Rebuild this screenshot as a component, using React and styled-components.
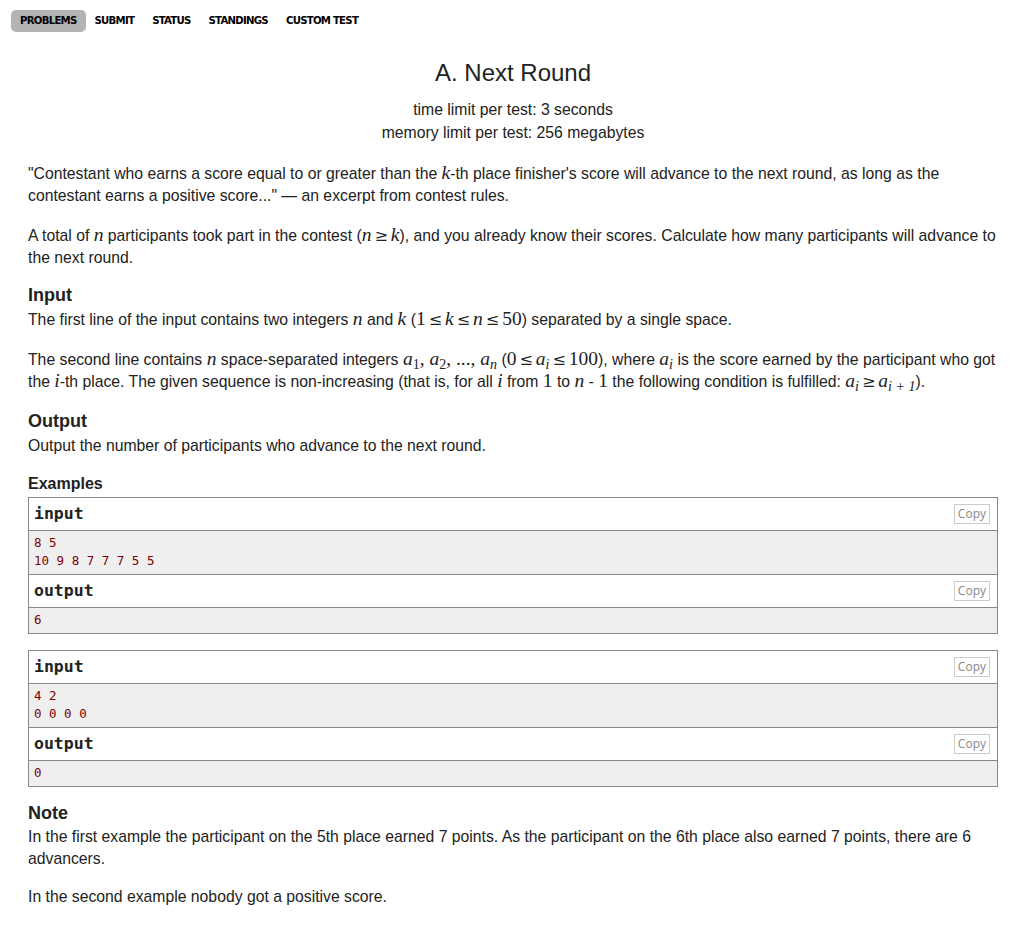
import styled, { createGlobalStyle } from 'styled-components'

const Global = createGlobalStyle`
	body {
		margin: 0;
		background: #fff;
		color: #222;
		font-family: "Liberation Sans", Arial, sans-serif;
	}
`

const Page = styled.div`
	padding: 10px 20px 0 11px;
`

const Tabs = styled.nav`
	display: flex;
`

const Tab = styled.div`
	padding: 4px 9px;
	border-radius: 5px;
	font-family: "DejaVu Sans Condensed", sans-serif;
	font-weight: bold;
	font-size: 11.3px;
	line-height: 14px;
	letter-spacing: -0.75px;
	color: #000;
	background: ${p => (p.$active ? '#b4b4b4' : 'transparent')};
`

const Statement = styled.div`
	padding: 0 0 0 17px;
	font-size: 15.75px;
	line-height: 22px;
`

const Header = styled.div`
	text-align: center;
	margin: 25px 0 19px;
`

const Title = styled.div`
	font-size: 24px;
	line-height: 32px;
	margin-bottom: 9px;
`

const Limit = styled.div`
	line-height: 23px;
`

const P = styled.p`
	margin: 0 0 ${p => p.$gap ?? 18}px;
`

const SectionTitle = styled.div`
	font-weight: bold;
	font-size: ${p => p.$size ?? 18}px;
	line-height: 20px;
	margin: ${p => p.$top ?? -1}px 0 ${p => p.$bottom ?? 4}px;
`

const M = styled.span`
	font-family: "Liberation Serif", "Times New Roman", serif;
	font-size: 19.5px;
	line-height: 1;
	font-style: ${p => (p.$up ? 'normal' : 'italic')};
`

const Sub = styled.sub`
	font-family: "Liberation Serif", "Times New Roman", serif;
	font-size: 14px;
	font-style: ${p => (p.$up ? 'normal' : 'italic')};
	line-height: 0;
`

const Op = styled.span`
	font-family: "DejaVu Serif", serif;
	font-size: 16px;
	line-height: 1;
	margin: 0 3px;
`

const Sample = styled.div`
	border: 1px solid #888;
	margin: 0 0 16px;
`

const SampleHead = styled.div`
	display: flex;
	justify-content: space-between;
	align-items: center;
	height: 32px;
	padding: 0 7px 0 5px;
	border-top: ${p => (p.$first ? 'none' : '1px solid #888')};
	border-bottom: 1px solid #888;
	font-family: "DejaVu Sans Mono", "Liberation Mono", monospace;
	font-weight: bold;
	font-size: 16.5px;
`

const Copy = styled.span`
	border: 1px solid #ccc;
	padding: 1px 3px;
	font-family: "Open Sans", sans-serif;
	font-weight: normal;
	font-size: 12px;
	line-height: 16px;
	color: #888;
`

const Pre = styled.pre`
	margin: 0;
	padding: 3px 5px 4px;
	background: #efefef;
	font-family: "DejaVu Sans Mono", "Liberation Mono", monospace;
	font-size: 12.5px;
	line-height: 18px;
	color: #800000;
`

const samples = [
	{ input: '8 5\n10 9 8 7 7 7 5 5', output: '6' },
	{ input: '4 2\n0 0 0 0', output: '0' }
]

const App = () => {
	return (
		<Page>
			<Global />
			<Tabs>
				<Tab $active>PROBLEMS</Tab>
				<Tab>SUBMIT</Tab>
				<Tab>STATUS</Tab>
				<Tab>STANDINGS</Tab>
				<Tab>CUSTOM TEST</Tab>
			</Tabs>
			<Statement>
				<Header>
					<Title>A. Next Round</Title>
					<Limit>time limit per test: 3 seconds</Limit>
					<Limit>memory limit per test: 256 megabytes</Limit>
				</Header>
				<P>
					"Contestant who earns a score equal to or greater than the <M>k</M>-th place finisher's score will advance to the next round, as long as the contestant earns a positive score..." — an excerpt from contest rules.
				</P>
				<P>
					A total of <M>n</M> participants took part in the contest (<M>n</M><Op>≥</Op><M>k</M>), and you already know their scores. Calculate how many participants will advance to the next round.
				</P>
				<SectionTitle $top={-2}>Input</SectionTitle>
				<P>
					The first line of the input contains two integers <M>n</M> and <M>k</M> (<M $up>1</M><Op>≤</Op><M>k</M><Op>≤</Op><M>n</M><Op>≤</Op><M $up>50</M>) separated by a single space.
				</P>
				<P>
					The second line contains <M>n</M> space-separated integers <M>a</M><Sub $up>1</Sub><M $up>, </M><M>a</M><Sub $up>2</Sub><M $up>, ..., </M><M>a</M><Sub>n</Sub> (<M $up>0</M><Op>≤</Op><M>a</M><Sub>i</Sub><Op>≤</Op><M $up>100</M>), where <M>a</M><Sub>i</Sub> is the score earned by the participant who got the <M>i</M>-th place. The given sequence is non-increasing (that is, for all <M>i</M> from <M $up>1</M> to <M>n</M> - <M $up>1</M> the following condition is fulfilled: <M>a</M><Sub>i</Sub><Op>≥</Op><M>a</M><Sub>i + 1</Sub>).
				</P>
				<SectionTitle $top={1}>Output</SectionTitle>
				<P>Output the number of participants who advance to the next round.</P>
				<SectionTitle $size={16} $top={-1} $bottom={3}>Examples</SectionTitle>
				{samples.map((s, i) => (
					<Sample key={i}>
						<SampleHead $first>input<Copy>Copy</Copy></SampleHead>
						<Pre>{s.input}</Pre>
						<SampleHead>output<Copy>Copy</Copy></SampleHead>
						<Pre>{s.output}</Pre>
					</Sample>
				))}
				<SectionTitle $top={5} $bottom={3}>Note</SectionTitle>
				<P $gap={16}>
					In the first example the participant on the 5th place earned 7 points. As the participant on the 6th place also earned 7 points, there are 6 advancers.
				</P>
				<P>In the second example nobody got a positive score.</P>
			</Statement>
		</Page>
	)
}

export default App
